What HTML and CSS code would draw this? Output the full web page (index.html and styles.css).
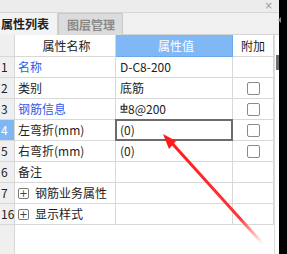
FILE: index.html
```html
<!DOCTYPE html>
<html lang="zh">
<head>
<meta charset="utf-8">
<link rel="stylesheet" href="styles.css">
</head>
<body>
<div class="app">
  <div class="panel">
    <div class="titlebar"><span class="close">×</span></div>
    <div class="tabs">
      <div class="tab active">属性列表</div>
      <div class="tab">图层管理</div>
    </div>
    <div class="body">
      <div class="grid">
        <div class="row head">
          <div class="c num"></div>
          <div class="c name center">属性名称</div>
          <div class="c val center sel-head">属性值</div>
          <div class="c add center">附加</div>
        </div>
        <div class="row">
          <div class="c num">1</div>
          <div class="c name blue">名称</div>
          <div class="c val">D-C8-200</div>
          <div class="c add"></div>
        </div>
        <div class="row">
          <div class="c num">2</div>
          <div class="c name">类别</div>
          <div class="c val">底筋</div>
          <div class="c add"><span class="chk"></span></div>
        </div>
        <div class="row">
          <div class="c num">3</div>
          <div class="c name blue">钢筋信息</div>
          <div class="c val"><svg class="rebar" width="8" height="10" viewBox="0 0 8 10"><path d="M4 0.5V8.5M1.2 3.2H6.8V6.2H1.2Z M0.5 9.2H7.5" fill="none" stroke="#222" stroke-width="1.1"/></svg>8@200</div>
          <div class="c add"><span class="chk"></span></div>
        </div>
        <div class="row">
          <div class="c num cur">4</div>
          <div class="c name">左弯折(mm)</div>
          <div class="c val focus">(0)</div>
          <div class="c add"><span class="chk"></span></div>
        </div>
        <div class="row">
          <div class="c num">5</div>
          <div class="c name">右弯折(mm)</div>
          <div class="c val">(0)</div>
          <div class="c add"><span class="chk"></span></div>
        </div>
        <div class="row">
          <div class="c num">6</div>
          <div class="c name">备注</div>
          <div class="c val"></div>
          <div class="c add"></div>
        </div>
        <div class="row">
          <div class="c num">7</div>
          <div class="c name"><span class="plus">+</span>钢筋业务属性</div>
          <div class="c val"></div>
          <div class="c add"></div>
        </div>
        <div class="row">
          <div class="c num">16</div>
          <div class="c name"><span class="plus">+</span>显示样式</div>
          <div class="c val"></div>
          <div class="c add"></div>
        </div>
      </div>
      <div class="scroll"><div class="thumb"></div></div>
    </div>
  </div>
  <div class="side"><span class="tri"></span></div>
  <svg class="arrow" width="287" height="254" viewBox="0 0 287 254">
    <defs>
      <linearGradient id="g" x1="263" y1="244" x2="170" y2="141" gradientUnits="userSpaceOnUse">
        <stop offset="0" stop-color="#ff3030" stop-opacity="0"/>
        <stop offset="0.25" stop-color="#ff2020" stop-opacity="0.9"/>
        <stop offset="1" stop-color="#ff1a1a"/>
      </linearGradient>
    </defs>
    <path d="M263 244L170 141" stroke="url(#g)" stroke-width="3" fill="none"/>
    <path d="M163 134L176 141L169 149Z" fill="#ff1a1a"/>
  </svg>
</div>
</body>
</html>
```
FILE: styles.css
```css
* { box-sizing: border-box; }
html, body { margin: 0; padding: 0; }
body {
  width: 287px;
  height: 254px;
  overflow: hidden;
  background: #fff;
  font-family: "Noto Sans CJK SC", "Noto Sans", sans-serif;
  font-size: 12px;
  color: #222;
}
.app {
  position: relative;
  display: flex;
  width: 287px;
  height: 254px;
}
.panel {
  width: 279px;
  display: flex;
  flex-direction: column;
}
.titlebar {
  height: 13px;
  background: #ececec;
  border-bottom: 1px solid #d6d6d6;
  display: flex;
  justify-content: flex-end;
  align-items: center;
}
.close {
  color: #9a9a9a;
  font-family: "DejaVu Sans", sans-serif;
  font-size: 10px;
  line-height: 10px;
  margin-right: 6px;
}
.tabs {
  height: 22px;
  display: flex;
  background: #f0f0f0;
  border-bottom: 1px solid #d4d4d4;
}
.tab {
  height: 22px;
  line-height: 21px;
  font-weight: bold;
  font-size: 12px;
  color: #8a8a8a;
  background: #dcdcdc;
  border: 1px solid #c8c8c8;
  border-bottom: none;
  padding: 0 0 0 8px;
  width: 65px;
  white-space: nowrap;
}
.tab.active {
  background: #f3f3f3;
  color: #222;
  border: none;
  border-right: 1px solid #d0d0d0;
  padding: 0 0 0 1px;
  width: 58px;
}
.body {
  flex: 1;
  display: flex;
}
.grid {
  width: 274px;
  background: linear-gradient(to right, #efefef 14px, #d8d8d8 14px, #d8d8d8 15px, #fff 15px);
}
.row {
  display: grid;
  grid-template-columns: 15px 101px 117px 41px;
  height: 21px;
}
.row.head { height: 22px; }
.c {
  border-right: 1px solid #d8d8d8;
  border-bottom: 1px solid #d8d8d8;
  display: flex;
  align-items: center;
  white-space: nowrap;
  overflow: visible;
  line-height: 1;
  position: relative;
}
.head .c { background: #fff; }
.head .c.num { background: #efefef; }
.center { justify-content: center; }
.num {
  background: #efefef;
  padding-left: 1px;
  font-size: 12px;
  color: #222;
}
.num.cur {
  background: #7fb7f4;
  color: #fff;
}
.name { padding-left: 3px; background: #fff; }
.val { padding-left: 4px; background: #fff; }
.add { justify-content: center; background: #fff; }
.blue { color: #2f5ae8; }
.sel-head {
  background: #80b8f5 !important;
  color: #fff;
  border-right-color: #6aa8ec;
  border-bottom-color: #6aa8ec;
}
.focus::after {
  content: "";
  position: absolute;
  left: -1px;
  top: -1px;
  right: -1px;
  bottom: -1px;
  border: 2px solid #6c6c6c;
}
.chk {
  width: 13px;
  height: 13px;
  border: 1px solid #8a8a8a;
  border-radius: 2px;
  background: #fff;
  margin-left: 1px;
}
.plus {
  width: 11px;
  height: 11px;
  border: 1px solid #7a7a7a;
  border-radius: 2px;
  font-family: "DejaVu Sans", sans-serif;
  font-size: 10px;
  line-height: 9px;
  text-align: center;
  color: #444;
  margin-right: 6px;
}
.rebar { margin-top: -2px; }
.scroll {
  width: 5px;
  border-left: 1px solid #dcdcdc;
  background: #fff;
  display: flex;
  justify-content: flex-end;
}
.thumb {
  width: 3px;
  height: 15px;
  margin-top: 20px;
  background: #6e6e6e;
}
.side {
  flex: 1;
  background: #000;
  position: relative;
}
.tri {
  position: absolute;
  left: -1px;
  top: 17px;
  width: 0;
  height: 0;
  border-top: 3px solid transparent;
  border-bottom: 3px solid transparent;
  border-right: 3px solid #8a8a8a;
}
.arrow {
  position: absolute;
  left: 0;
  top: 0;
  pointer-events: none;
}
```
